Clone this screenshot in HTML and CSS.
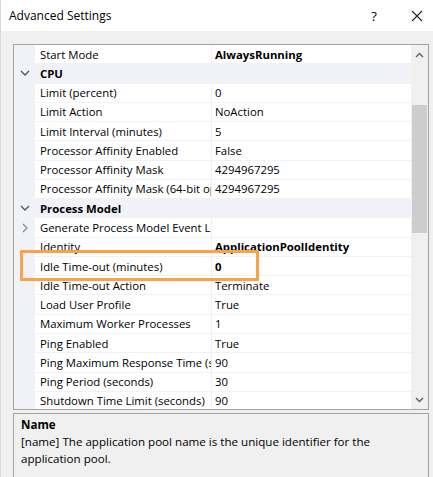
FILE: index.html
```html
<!DOCTYPE html>
<html>
<head>
<meta charset="utf-8">
<link rel="stylesheet" href="styles.css">
</head>
<body>
<div class="window">
  <div class="titlebar">
    <span class="title">Advanced Settings</span>
    <span class="help">?</span>
    <span class="close">
      <svg width="12" height="12" viewBox="0 0 12 12"><path d="M1 1 L11 11 M11 1 L1 11" stroke="#222" stroke-width="1.1" fill="none"/></svg>
    </span>
  </div>
  <div class="content">
    <div class="grid">
      <div class="rows">
        <div class="row"><div class="gut"></div><div class="name">Start Mode</div><div class="val bold">AlwaysRunning</div></div>
        <div class="row cat"><div class="gut"><svg width="10" height="6" viewBox="0 0 10 6"><path d="M1 1 L5 5 L9 1" stroke="#555" stroke-width="1.3" fill="none"/></svg></div><div class="catname">CPU</div></div>
        <div class="row"><div class="gut"></div><div class="name">Limit (percent)</div><div class="val">0</div></div>
        <div class="row"><div class="gut"></div><div class="name">Limit Action</div><div class="val">NoAction</div></div>
        <div class="row"><div class="gut"></div><div class="name">Limit Interval (minutes)</div><div class="val">5</div></div>
        <div class="row"><div class="gut"></div><div class="name">Processor Affinity Enabled</div><div class="val">False</div></div>
        <div class="row"><div class="gut"></div><div class="name">Processor Affinity Mask</div><div class="val">4294967295</div></div>
        <div class="row"><div class="gut"></div><div class="name"><span class="clip">Processor Affinity Mask (64-bit option)</span></div><div class="val">4294967295</div></div>
        <div class="row cat"><div class="gut"><svg width="10" height="6" viewBox="0 0 10 6"><path d="M1 1 L5 5 L9 1" stroke="#555" stroke-width="1.3" fill="none"/></svg></div><div class="catname">Process Model</div></div>
        <div class="row"><div class="gut"><svg width="6" height="10" viewBox="0 0 6 10"><path d="M1 1 L5 5 L1 9" stroke="#888" stroke-width="1.2" fill="none"/></svg></div><div class="name"><span class="clip">Generate Process Model Event Log Entry</span></div><div class="val"></div></div>
        <div class="row"><div class="gut"></div><div class="name">Identity</div><div class="val bold">ApplicationPoolIdentity</div></div>
        <div class="row"><div class="gut"></div><div class="name">Idle Time-out (minutes)</div><div class="val bold">0</div></div>
        <div class="row"><div class="gut"></div><div class="name">Idle Time-out Action</div><div class="val">Terminate</div></div>
        <div class="row"><div class="gut"></div><div class="name">Load User Profile</div><div class="val">True</div></div>
        <div class="row"><div class="gut"></div><div class="name">Maximum Worker Processes</div><div class="val">1</div></div>
        <div class="row"><div class="gut"></div><div class="name">Ping Enabled</div><div class="val">True</div></div>
        <div class="row"><div class="gut"></div><div class="name"><span class="clip">Ping Maximum Response Time (seconds)</span></div><div class="val">90</div></div>
        <div class="row"><div class="gut"></div><div class="name">Ping Period (seconds)</div><div class="val">30</div></div>
        <div class="row"><div class="gut"></div><div class="name">Shutdown Time Limit (seconds)</div><div class="val">90</div></div>
        <div class="highlight"></div>
      </div>
      <div class="scrollbar">
        <div class="arrow"><svg width="9" height="6" viewBox="0 0 9 6"><path d="M1 5 L4.5 1.5 L8 5" stroke="#606060" stroke-width="1.4" fill="none"/></svg></div>
        <div class="track"><div class="thumb"></div></div>
        <div class="arrow"><svg width="9" height="6" viewBox="0 0 9 6"><path d="M1 1 L4.5 4.5 L8 1" stroke="#606060" stroke-width="1.4" fill="none"/></svg></div>
      </div>
    </div>
    <div class="desc">
      <div class="desc-title">Name</div>
      <div class="desc-text">[name] The application pool name is the unique identifier for the application pool.</div>
    </div>
  </div>
</div>
</body>
</html>
```

FILE: styles.css
```css
html, body {
  margin: 0;
  padding: 0;
}
body {
  width: 433px;
  height: 477px;
  overflow: hidden;
  background: #f0f0f0;
  font-family: "Open Sans", "Noto Sans", "DejaVu Sans", sans-serif;
  font-size: 11.35px;
  color: #000;
}
.window {
  height: 500px;
  display: flex;
  flex-direction: column;
  border-left: 1px solid #d8d8d8;
  box-sizing: border-box;
}
.titlebar {
  height: 31px;
  background: #fff;
  display: flex;
  align-items: center;
  padding-left: 8px;
  font-size: 12px;
  flex-shrink: 0;
}
.title {
  flex: 1;
}
.help {
  width: 20px;
  font-size: 13px;
  margin-right: 27px;
  text-align: center;
}
.close {
  width: 14px;
  display: flex;
  margin-right: 8px;
}
.content {
  padding: 13px 4px 0 12px;
  display: flex;
  flex-direction: column;
  flex: 1;
  min-height: 0;
}
.grid {
  height: 366px;
  border: 1px solid #a3a3a3;
  box-sizing: border-box;
  display: flex;
  background: #fff;
  flex-shrink: 0;
}
.rows {
  flex: 1;
  position: relative;
  overflow: hidden;
}
.row {
  height: 19.28px;
  display: grid;
  grid-template-columns: 21px 177px 1fr;
  align-items: stretch;
  box-sizing: border-box;
  border-bottom: 1px solid #f2f2f4;
  white-space: nowrap;
}
.gut {
  background: #f1f2f7;
  display: flex;
  align-items: center;
  justify-content: center;
}
.name {
  padding-left: 5px;
  overflow: hidden;
  display: flex;
  align-items: center;
  border-right: 1px solid #f0f0f2;
  min-width: 0;
}
.clip {
  display: block;
  overflow: hidden;
  text-overflow: clip;
  min-width: 0;
}
.val {
  padding-left: 3px;
  overflow: hidden;
  display: flex;
  align-items: center;
}
.bold {
  font-weight: 700;
}
.cat {
  background: #f1f2f7;
  border-bottom-color: #f1f2f7;
}
.catname {
  grid-column: 2 / 4;
  padding-left: 5px;
  font-weight: 700;
  display: flex;
  align-items: center;
}
.highlight {
  position: absolute;
  left: 6px;
  top: 205px;
  width: 239px;
  height: 31px;
  border: 3px solid #f6a34a;
  box-sizing: border-box;
  border-radius: 1px;
}
.scrollbar {
  width: 17px;
  background: #f0f0f0;
  display: flex;
  flex-direction: column;
}
.arrow {
  height: 19px;
  display: flex;
  align-items: center;
  justify-content: center;
}
.track {
  flex: 1;
  padding-top: 41px;
}
.thumb {
  margin: 0 1px;
  height: 128px;
  background: #cdcdcd;
}
.desc {
  margin-top: 3px;
  border: 1px solid #a3a3a3;
  flex: 1;
  padding: 2px 7px;
  background: #f0f0f0;
  font-size: 11.6px;
}
.desc-title {
  font-weight: 700;
  line-height: 17px;
}
.desc-text {
  line-height: 17px;
  padding-right: 40px;
}
```
